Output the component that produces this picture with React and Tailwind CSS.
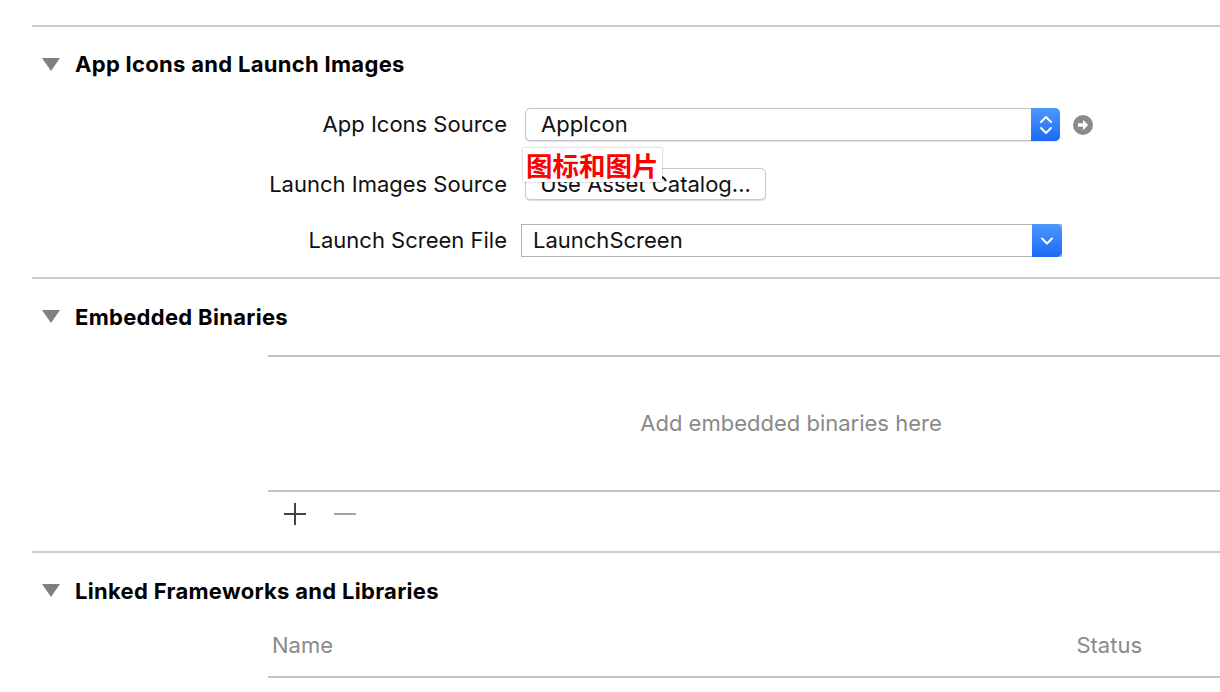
import React from "react";

const font = { fontFamily: "Inter, 'Noto Sans', sans-serif" };

const Disclosure = () => (
  <svg width="18" height="14" viewBox="0 0 18 14" className="shrink-0">
    <polygon points="0,0 18,0 9,13" fill="#808080" />
  </svg>
);

const Separator = () => <div className="ml-[32px] h-[2px] bg-[#cbcbcb]" />;

const SectionHeading = ({ title, className = "h-[76px]" }) => (
  <div className={`flex items-center pl-[42px] ${className}`}>
    <Disclosure />
    <span className="ml-[15px] text-[22px] font-bold tracking-[0.3px] text-black">{title}</span>
  </div>
);

const Stepper = () => (
  <svg width="14" height="22" viewBox="0 0 14 22">
    <path d="M2 8 L7 3 L12 8" stroke="white" strokeWidth="2" fill="none" strokeLinecap="round" strokeLinejoin="round" />
    <path d="M2 14 L7 19 L12 14" stroke="white" strokeWidth="2" fill="none" strokeLinecap="round" strokeLinejoin="round" />
  </svg>
);

const ChevronDown = () => (
  <svg width="14" height="10" viewBox="0 0 14 10">
    <path d="M2 2.5 L7 7.5 L12 2.5" stroke="white" strokeWidth="2" fill="none" strokeLinecap="round" strokeLinejoin="round" />
  </svg>
);

const ArrowCircle = () => (
  <svg width="20" height="20" viewBox="0 0 20 20">
    <circle cx="10" cy="10" r="10" fill="#8a8a8a" />
    <path d="M5 8.2 H10 V4.8 L15.2 10 L10 15.2 V11.8 H5 Z" fill="white" />
  </svg>
);

const Row = ({ label, children, className = "" }) => (
  <div className={`flex items-center ${className}`}>
    <div className="w-[507px] text-right text-[22px] text-[#111]">{label}</div>
    <div className="relative ml-[18px] flex flex-1 items-center">{children}</div>
  </div>
);

export default function App() {
  return (
    <div className="h-[692px] w-[1220px] overflow-hidden bg-white" style={font}>
      <div className="h-[25px]" />

      {/* App Icons and Launch Images */}
      <Separator />
      <SectionHeading title="App Icons and Launch Images" className="h-[75px]" />
      <div className="pt-[6px] pb-[20px]">
        <Row label="App Icons Source" className="h-[33px]">
          <div className="flex h-[33px] w-[535px] items-stretch rounded-[5px] border border-[#c4c4c4] bg-white shadow-[0_1px_1px_rgba(0,0,0,0.12)]">
            <div className="flex flex-1 items-center pl-[15px] text-[22px] text-[#111]">AppIcon</div>
            <div className="-my-px -mr-px flex w-[29px] items-center justify-center rounded-r-[5px] bg-gradient-to-b from-[#4d97fd] to-[#1a6af6]">
              <Stepper />
            </div>
          </div>
          <div className="ml-[13px] flex items-center">
            <ArrowCircle />
          </div>
        </Row>
        <Row label="Launch Images Source" className="mt-[27px] h-[32px]">
          <div className="flex h-[32px] w-[241px] items-center justify-center rounded-[5px] border border-[#c8c8c8] bg-white text-[22px] text-[#111] shadow-[0_1px_1px_rgba(0,0,0,0.15)]">
            Use Asset Catalog...
          </div>
          <div
            className="absolute left-[-2px] top-[-20px] flex h-[34px] items-center bg-white px-[3px] text-[26.5px] font-bold leading-none text-[#ff0000] shadow-[0_0_2px_rgba(0,0,0,0.35)]"
            style={{ fontFamily: "'Noto Sans CJK SC', sans-serif" }}
          >
            图标和图片
          </div>
        </Row>
        <Row label="Launch Screen File" className="mt-[24px] h-[33px]">
          <div className="-ml-[4px] flex h-[33px] w-[541px] items-stretch border border-[#b4b4b4] bg-white">
            <div className="flex flex-1 items-center pl-[11px] text-[22px] text-[#111]">LaunchScreen</div>
            <div className="-my-px -mr-px flex w-[30px] items-center justify-center rounded-r-[5px] bg-gradient-to-b from-[#4d97fd] to-[#1a6af6]">
              <ChevronDown />
            </div>
          </div>
        </Row>
      </div>

      {/* Embedded Binaries */}
      <Separator />
      <SectionHeading title="Embedded Binaries" />
      <div className="ml-[268px] h-[2px] bg-[#c4c4c4]" />
      <div className="ml-[268px] flex h-[133px] items-center justify-center pl-[94px] text-[22px] text-[#8a8a8a]">
        Add embedded binaries here
      </div>
      <div className="ml-[268px] h-[2px] bg-[#c4c4c4]" />
      <div className="ml-[284px] flex h-[59px] items-start gap-[28px] pt-[11px]">
        <svg width="22" height="22" viewBox="0 0 22 22">
          <path d="M11 0 V22 M0 11 H22" stroke="#444" strokeWidth="2" />
        </svg>
        <svg width="22" height="22" viewBox="0 0 22 22">
          <path d="M0 11 H22" stroke="#a3a3a3" strokeWidth="2" />
        </svg>
      </div>

      {/* Linked Frameworks and Libraries */}
      <Separator />
      <SectionHeading title="Linked Frameworks and Libraries" />
      <div className="ml-[268px] flex h-[47px] items-center pb-[15px] text-[22px] text-[#8a8a8a]">
        <span className="ml-[4px]">Name</span>
        <span className="ml-auto mr-[78px]">Status</span>
      </div>
      <div className="ml-[268px] h-[2px] bg-[#c4c4c4]" />
    </div>
  );
}
